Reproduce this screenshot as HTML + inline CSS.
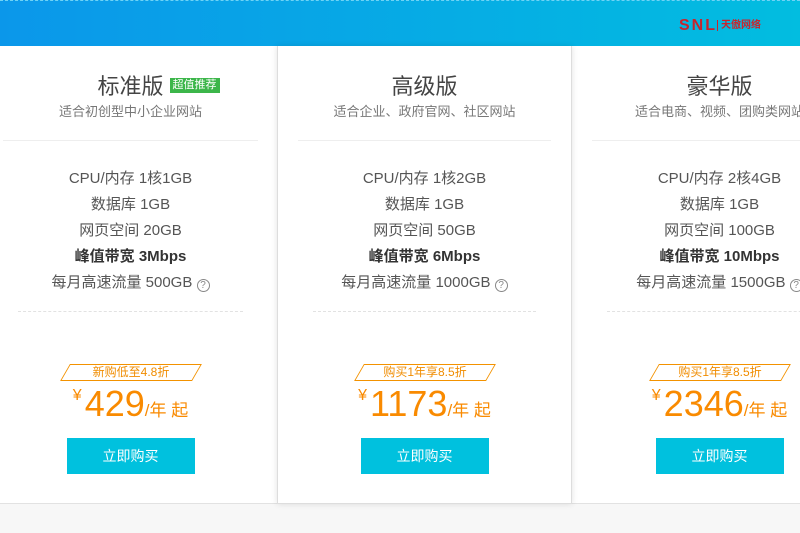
<!DOCTYPE html>
<html><head><meta charset="utf-8"><style>
*{margin:0;padding:0;box-sizing:border-box}
body{width:800px;height:533px;overflow:hidden;background:#f7f7f7;font-family:"Liberation Sans","Noto Sans CJK SC",sans-serif;position:relative}
.hdr{position:absolute;left:0;top:0;width:800px;height:46px;background:linear-gradient(90deg,#0b97ea,#02bde0);border-top:1px dashed #6fd3f5}
.logo{position:absolute;left:679px;top:15px;color:#c8242d;font-weight:bold;font-size:16px;letter-spacing:2px}
.logo span{font-size:10px;border-left:1px solid #c8242d;padding-left:3px;margin-left:0;letter-spacing:0;vertical-align:2px}
.main{position:absolute;left:0;top:46px;width:800px;height:458px;background:#fff;border-bottom:1px solid #e2e2e2}
.card{position:absolute;top:46px;width:295px;height:458px;text-align:center}
.c2{background:#fff;border:1px solid #ddd;border-top:none;box-shadow:0 0 6px rgba(0,0,0,.12);z-index:2}
.t{position:absolute;left:0;width:100%;top:23px;font-size:22px;color:#444}
.t i{font-style:normal;position:relative}
.badge{position:absolute;left:100%;top:4px;margin-left:6px;white-space:nowrap;background:#3cb64a;color:#fff;font-size:11px;line-height:15px;padding:0 3px}
.s{position:absolute;left:0;width:100%;top:55px;font-size:13px;color:#777}
.ln{position:absolute;left:20px;right:20px;top:94px;border-top:1px solid #eee}
.sp{position:absolute;left:0;width:100%;top:120px;font-size:15px;color:#555;line-height:26px}
.sp b{color:#333}
.q{display:inline-block;width:13px;height:13px;border:1px solid #888;border-radius:50%;font-size:10px;line-height:11px;color:#888;vertical-align:-1px}
.dl{position:absolute;left:35px;right:35px;top:265px;border-top:1px dashed #e2e2e2}
.tag{position:absolute;left:50%;top:318px;margin-left:-66px;width:132px;height:17px;border:1px solid #f39200;transform:skewX(-30deg);}
.tag span{display:block;transform:skewX(30deg);font-size:12px;color:#f08c00;line-height:15px}
.pr{position:absolute;left:0;width:100%;top:337px;color:#f98a00;white-space:nowrap}
.pr .y{font-size:16px;vertical-align:16px;margin-right:3px}
.pr .n{font-size:36px}
.pr .u{font-size:17px}
.btn{position:absolute;left:50%;margin-left:-64px;top:392px;width:128px;height:36px;background:#00c1de;color:#fff;font-size:14px;line-height:36px}
</style></head><body>
<div class="hdr"><div class="logo">SNL<span>天傲网络</span></div></div>
<div class="main"></div>
<div class="card" style="left:-17px;z-index:1">
<div class="t"><i>标准版<span class="badge">超值推荐</span></i></div>
<div class="s">适合初创型中小企业网站</div><div class="ln"></div>
<div class="sp">CPU/内存 1核1GB<br>数据库 1GB<br>网页空间 20GB<br><b>峰值带宽 3Mbps</b><br>每月高速流量 500GB <span class="q">?</span></div>
<div class="dl"></div><div class="tag"><span>新购低至4.8折</span></div>
<div class="pr"><span class="y">¥</span><span class="n">429</span><span class="u">/年 起</span></div>
<div class="btn">立即购买</div></div>
<div class="card c2" style="left:277px">
<div class="t">高级版</div>
<div class="s">适合企业、政府官网、社区网站</div><div class="ln"></div>
<div class="sp">CPU/内存 1核2GB<br>数据库 1GB<br>网页空间 50GB<br><b>峰值带宽 6Mbps</b><br>每月高速流量 1000GB <span class="q">?</span></div>
<div class="dl"></div><div class="tag"><span>购买1年享8.5折</span></div>
<div class="pr"><span class="y">¥</span><span class="n">1173</span><span class="u">/年 起</span></div>
<div class="btn">立即购买</div></div>
<div class="card" style="left:572px;z-index:1">
<div class="t">豪华版</div>
<div class="s">适合电商、视频、团购类网站</div><div class="ln"></div>
<div class="sp">CPU/内存 2核4GB<br>数据库 1GB<br>网页空间 100GB<br><b>峰值带宽 10Mbps</b><br>每月高速流量 1500GB <span class="q">?</span></div>
<div class="dl"></div><div class="tag"><span>购买1年享8.5折</span></div>
<div class="pr"><span class="y">¥</span><span class="n">2346</span><span class="u">/年 起</span></div>
<div class="btn">立即购买</div></div>
</body></html>
